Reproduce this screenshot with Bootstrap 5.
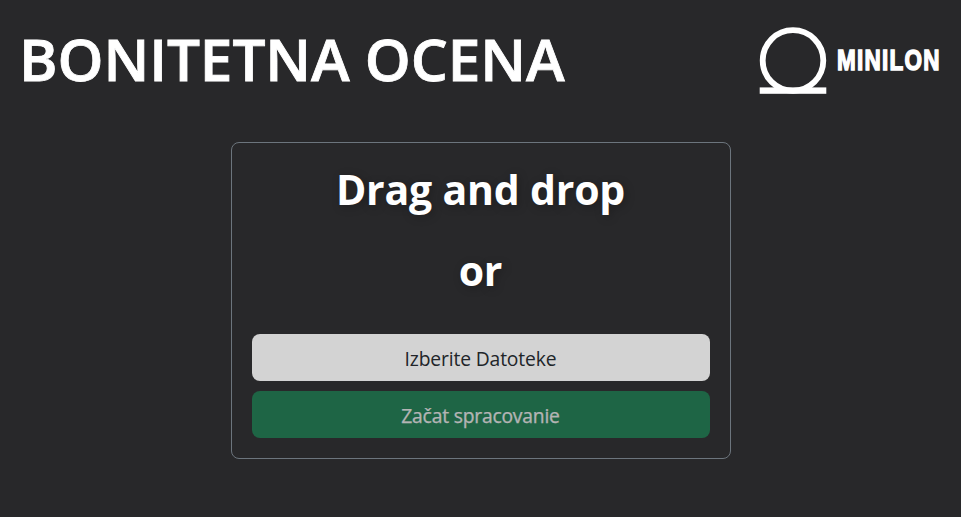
<!DOCTYPE html>
<html lang="sl">
<head>
<meta charset="utf-8">
<meta name="viewport" content="width=device-width, initial-scale=1">
<title>Bonitetna ocena</title>
<link href="https://cdn.jsdelivr.net/npm/bootstrap@5.3.0/dist/css/bootstrap.min.css" rel="stylesheet">
<style>
body { background: #28282a; font-family: "Segoe UI", "Open Sans", "Noto Sans", sans-serif; }
.page-header { height: 120px; padding: 0 20px 0 19px; }
.page-title { font-size: 58.5px; font-weight: 600; line-height: 1; letter-spacing: -.1px; padding-bottom: 4px; -webkit-text-stroke: .8px #fff; }
.drop-zone { width: 500px; height: 317px; margin-top: 22px; padding: 21px 20px 20px; border: 1px solid #6c757d; border-radius: 8px; }
.drop-zone h2 { font-size: 41px; font-weight: 700; line-height: 50px; letter-spacing: -.2px; margin-bottom: 31px; text-shadow: 2px 2px 10px rgba(0, 0, 0, .25); }
.drop-actions { gap: 10px; padding-top: 8px; }
.drop-zone .btn { height: 47px; padding: 2px 16px 0; line-height: 45px; font-size: 19.3px; border: 0; border-radius: 8px; }
.btn-pick { background: #d3d3d3; color: #212529; font-weight: 400; letter-spacing: -.15px; }
.btn-pick:hover { background: #c4c4c4; }
.btn-start { letter-spacing: -.2px; -webkit-text-stroke: .25px currentColor; }
.brand-logo { overflow: visible; }
</style>
</head>
<body class="text-white">
<header class="page-header d-flex justify-content-between align-items-center">
  <h1 class="page-title mb-0">BONITETNA OCENA</h1>
  <svg class="brand-logo" width="182" height="68" viewBox="0 0 182 68" fill="#fff" role="img" aria-label="Minilon">
    <circle cx="34" cy="34.5" r="30.3" fill="none" stroke="#fff" stroke-width="5.8"/>
    <rect x="0.7" y="61.4" width="66.6" height="6.4"/>
    <text transform="translate(78 44.2) scale(.73 1)" font-family="Liberation Sans, Arial, sans-serif" font-size="29" font-weight="700" stroke="#fff" stroke-width="1.5" letter-spacing="1.6" textLength="142" lengthAdjust="spacingAndGlyphs">MINILON</text>
  </svg>
</header>
<main class="d-flex justify-content-center">
  <section class="drop-zone text-center">
    <h2>Drag and drop</h2>
    <h2>or</h2>
    <div class="drop-actions d-grid">
      <button type="button" class="btn btn-pick">Izberite Datoteke</button>
      <button type="button" class="btn btn-success btn-start" disabled>Začat spracovanie</button>
    </div>
  </section>
</main>
<script src="https://cdn.jsdelivr.net/npm/bootstrap@5.3.0/dist/js/bootstrap.bundle.min.js"></script>
</body>
</html>
